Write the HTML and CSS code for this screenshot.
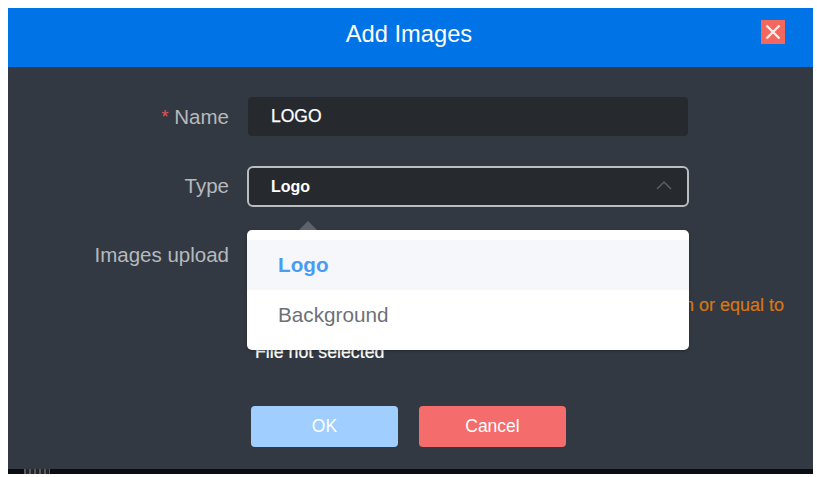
FILE: index.html
```html
<!DOCTYPE html>
<html lang="en">
<head>
<meta charset="utf-8">
<title>Add Images</title>
<link rel="stylesheet" href="styles.css">
</head>
<body>
<div class="dialog">
  <header class="head">
    <h1 class="title">Add Images</h1>
    <button class="close" aria-label="Close">
      <svg viewBox="0 0 24 24" width="24" height="24"><path d="M5.5 5.5L18.5 18.5M18.5 5.5L5.5 18.5" fill="none" stroke="#ffeeea" stroke-width="2.3"/></svg>
    </button>
  </header>
  <form class="form">
    <div class="row row-name">
      <label class="label"><span class="req">*</span> Name</label>
      <div class="input">LOGO</div>
    </div>
    <div class="row row-type">
      <label class="label">Type</label>
      <div class="field">
        <div class="input select">
          <span class="bold">Logo</span>
          <svg class="chev" viewBox="0 0 18 10" width="18" height="10"><path d="M2 9L9 2L16 9" fill="none" stroke="#5a5e66" stroke-width="1.5"/></svg>
        </div>
        <div class="menu">
          <span class="arrow"></span>
          <div class="opt active">Logo</div>
          <div class="opt">Background</div>
        </div>
      </div>
    </div>
    <div class="row row-upload">
      <label class="label">Images upload</label>
      <div class="upload">
        <div class="hint">Image size must be less than or equal to</div>
        <div class="file">File not selected</div>
      </div>
    </div>
    <div class="actions">
      <button type="button" class="btn ok">OK</button>
      <button type="button" class="btn cancel">Cancel</button>
    </div>
  </form>
</div>
<div class="strip"><span class="mark"></span></div>
</body>
</html>
```

FILE: styles.css
```css
* { box-sizing: border-box; }
html, body { height: 100%; }
body {
  margin: 0;
  padding: 8px 4px 0 8px;
  background: #fff;
  font-family: "Liberation Sans", Arial, sans-serif;
  overflow: hidden;
}
.dialog { background: #333942; height: 461px; }
.head {
  height: 59px;
  background: #0073e6;
  display: flex;
  align-items: center;
  justify-content: center;
  position: relative;
}
.title {
  margin: 0 3px 7px 0;
  font-size: 23.7px;
  font-weight: 400;
  color: #fff;
}
.close {
  position: absolute;
  right: 28px;
  top: 12px;
  width: 24px;
  height: 24px;
  padding: 0;
  border: 0;
  background: #f4675f;
  display: flex;
}
.form { padding-top: 30px; }
.row { display: flex; }
.label {
  width: 221px;
  flex: none;
  text-align: right;
  font-size: 20.5px;
  line-height: 24px;
  color: #b6b9bd;
}
.req { color: #e8505b; font-size: 18px; vertical-align: 1px; }
.row-name { align-items: center; height: 39px; }
.row-type { margin-top: 30px; align-items: flex-start; }
.row-type .label { line-height: 40px; }
.row-upload { margin-top: 28px; align-items: flex-start; height: 171px; }
.row-upload .label { margin-top: 8px; }
.input {
  margin-left: 19px;
  width: 440px;
  height: 39px;
  background: #262a2f;
  border-radius: 4px;
  padding-left: 23px;
  color: #fff;
  font-size: 17.5px;
  line-height: 39px;
  -webkit-text-stroke: 0.25px #fff;
}
.field { position: relative; margin-left: 18px; }
.select {
  margin-left: 0;
  width: 442px;
  height: 41px;
  border: 2px solid #b9bcc0;
  border-radius: 6px;
  line-height: 37px;
  display: flex;
  justify-content: space-between;
  align-items: center;
  padding-left: 22px;
  padding-right: 14px;
}
.bold { font-weight: 700; font-size: 16px; -webkit-text-stroke: 0; }
.chev { margin-top: -3px; }
.menu {
  position: absolute;
  z-index: 2;
  left: 0;
  top: 64px;
  width: 442px;
  height: 120px;
  background: #fff;
  border-radius: 5px;
  padding-top: 10px;
  box-shadow: 0 1px 3px rgba(0, 0, 0, 0.3);
}
.arrow {
  position: absolute;
  left: 52px;
  top: -9px;
  width: 0;
  height: 0;
  border-left: 9px solid transparent;
  border-right: 9px solid transparent;
  border-bottom: 9px solid #5e6269;
}
.opt {
  height: 50px;
  line-height: 50px;
  padding-left: 31px;
  font-size: 20.7px;
  color: #6e7076;
}
.active { background: #f5f7fa; color: #4a9cf3; font-weight: 700; }
.upload { margin-left: 19px; flex: 1; }
.hint {
  width: 536px;
  margin-top: 60px;
  text-align: right;
  white-space: nowrap;
  font-size: 18px;
  line-height: 20px;
  color: #d57714;
  -webkit-text-stroke: 0.2px #d57714;
}
.file {
  margin-top: 27px;
  margin-left: 7px;
  font-size: 17.8px;
  line-height: 20px;
  color: #fff;
  -webkit-text-stroke: 0.2px #fff;
}
.actions { display: flex; gap: 21px; padding-left: 243px; }
.btn {
  width: 147px;
  height: 41px;
  border: 0;
  border-radius: 4px;
  color: #fff;
  font-family: inherit;
  font-size: 17.5px;
}
.ok { background: #a0cfff; }
.cancel { background: #f56c6c; }
.strip { height: 5px; background: #0a0d12; }
.mark {
  display: block;
  margin-left: 16px;
  width: 26px;
  height: 5px;
  background: repeating-linear-gradient(90deg, #565a58 0 2px, #23262a 2px 5px);
}
```
